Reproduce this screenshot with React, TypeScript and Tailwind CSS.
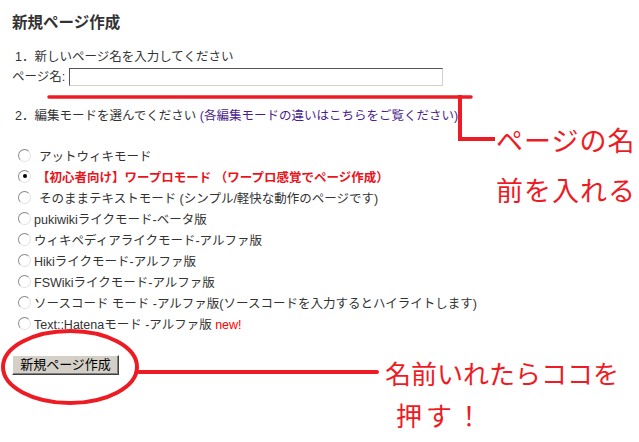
import React from 'react';

interface ModeOption {
  label: React.ReactNode;
  checked?: boolean;
  indent?: string;
}

const modes: ModeOption[] = [
  { label: 'アットウィキモード', indent: 'ml-[8px]' },
  {
    label: <span className="font-bold text-[#e8141c]">【初心者向け】ワープロモード （ワープロ感覚でページ作成）</span>,
    checked: true,
    indent: 'ml-[6px]',
  },
  { label: 'そのままテキストモード (シンプル/軽快な動作のページです)', indent: 'ml-[8px]' },
  { label: 'pukiwikiライクモード-ベータ版' },
  { label: 'ウィキペディアライクモード-アルファ版' },
  { label: 'Hikiライクモード-アルファ版' },
  { label: 'FSWikiライクモード-アルファ版' },
  { label: 'ソースコード モード -アルファ版(ソースコードを入力するとハイライトします)' },
  {
    label: (
      <>
        Text::Hatenaモード -アルファ版 <span className="text-[#ff0000]">new!</span>
      </>
    ),
  },
];

const Radio = ({ checked }: { checked?: boolean }) => (
  <span className="relative -mt-[3px] inline-block h-[13px] w-[13px] shrink-0 rounded-full border border-t-[#8a8a8a] border-l-[#8a8a8a] border-b-[#e2e2e2] border-r-[#e2e2e2] bg-white">
    {checked && <span className="absolute left-[3.5px] top-[3.5px] h-[4px] w-[4px] rounded-full bg-black" />}
  </span>
);

const Annotations = () => (
  <>
    <svg className="pointer-events-none absolute left-0 top-0" width="639" height="442" viewBox="0 0 639 442">
      <g fill="none" stroke="#ed1c24" strokeLinecap="round">
        <path d="M49 97 L471 97" strokeWidth="3.5" />
        <path d="M460 97 L460 139 L493 139" strokeWidth="4" strokeLinecap="square" />
        <ellipse cx="70" cy="367" rx="67" ry="36" strokeWidth="4" />
        <path d="M139 372 L377 372" strokeWidth="4" />
      </g>
    </svg>
    <div className="pointer-events-none absolute left-[496px] top-[125px] text-[27px] leading-[34px] tracking-[1px] text-[#ed1c24]">
      ページの名
    </div>
    <div className="pointer-events-none absolute left-[496px] top-[175px] text-[27px] leading-[34px] tracking-[1px] text-[#ed1c24]">
      前を入れる
    </div>
    <div className="pointer-events-none absolute left-[385px] top-[358px] text-[26px] leading-[34px] text-[#ed1c24]">
      名前いれたらココを
    </div>
    <div className="pointer-events-none absolute left-[396px] top-[400px] text-[26px] leading-[34px] tracking-[4px] text-[#ed1c24]">
      押す！
    </div>
  </>
);

const App = () => {
  return (
    <div
      className="relative h-[442px] w-[639px] overflow-hidden bg-white text-[12.5px] text-[#333]"
      style={{ fontFamily: '"Liberation Sans", "Noto Sans CJK JP", sans-serif' }}
    >
      <div className="flex flex-col pl-3 pt-[13px]">
        <h1 className="text-[15.5px] font-bold leading-[20px] text-[#333]">新規ページ作成</h1>

        <p className="mt-[16px] ml-[3px] leading-[16px]">1．新しいページ名を入力してください</p>
        <div className="mt-[3px] flex items-center">
          <span className="leading-[18px]">ページ名:</span>
          <input
            type="text"
            className="ml-[4px] h-[18px] w-[374px] border border-t-[#555] border-l-[#555] border-b-[#d4d0c8] border-r-[#d4d0c8] bg-white outline-none"
          />
        </div>

        <p className="mt-[22px] ml-[3px] leading-[16px]">
          2．編集モードを選んでください <a className="text-[#4a1e8c]">(各編集モードの違いはこちらをご覧ください)</a>
        </p>

        <ul className="mt-[22px] flex flex-col">
          {modes.map((mode, index) => (
            <li key={index} className="flex h-[21px] items-center pl-[6px]">
              <Radio checked={mode.checked} />
              <span className={`${mode.indent ?? 'ml-[3px]'} leading-[16px]`}>{mode.label}</span>
            </li>
          ))}
        </ul>

        <div className="mt-[20px]">
          <button className="h-[20px] w-[107px] border border-t-white border-l-white border-b-[#404040] border-r-[#404040] bg-[#d4d0c8] text-[13px] leading-[16px] text-black shadow-[inset_-1px_-1px_0_#808080]">
            新規ページ作成
          </button>
        </div>
      </div>

      <Annotations />
    </div>
  );
};

export default App;
